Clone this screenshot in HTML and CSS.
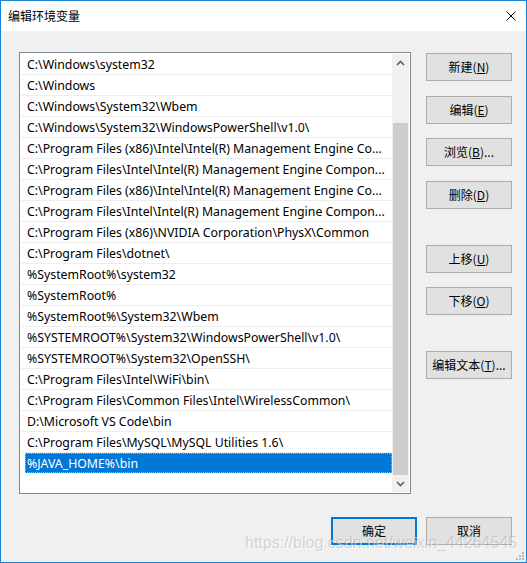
FILE: index.html
```html
<!DOCTYPE html>
<html lang="zh-CN">
<head>
<meta charset="utf-8">
<title>编辑环境变量</title>
<link rel="stylesheet" href="styles.css">
</head>
<body>
<div class="window">
  <div class="titlebar">
    <span class="title">编辑环境变量</span>
    <span class="close">
      <svg width="10" height="10" viewBox="0 0 10 10"><path d="M0.5 0.5 L9.5 9.5 M9.5 0.5 L0.5 9.5" stroke="#000" stroke-width="1" fill="none"/></svg>
    </span>
  </div>
  <div class="content">
    <div class="main">
      <div class="listbox">
        <ul class="items">
          <li>C:\Windows\system32</li>
          <li>C:\Windows</li>
          <li>C:\Windows\System32\Wbem</li>
          <li>C:\Windows\System32\WindowsPowerShell\v1.0\</li>
          <li>C:\Program Files (x86)\Intel\Intel(R) Management Engine Co...</li>
          <li>C:\Program Files\Intel\Intel(R) Management Engine Compon...</li>
          <li>C:\Program Files (x86)\Intel\Intel(R) Management Engine Co...</li>
          <li>C:\Program Files\Intel\Intel(R) Management Engine Compon...</li>
          <li>C:\Program Files (x86)\NVIDIA Corporation\PhysX\Common</li>
          <li>C:\Program Files\dotnet\</li>
          <li>%SystemRoot%\system32</li>
          <li>%SystemRoot%</li>
          <li>%SystemRoot%\System32\Wbem</li>
          <li>%SYSTEMROOT%\System32\WindowsPowerShell\v1.0\</li>
          <li>%SYSTEMROOT%\System32\OpenSSH\</li>
          <li>C:\Program Files\Intel\WiFi\bin\</li>
          <li>C:\Program Files\Common Files\Intel\WirelessCommon\</li>
          <li>D:\Microsoft VS Code\bin</li>
          <li>C:\Program Files\MySQL\MySQL Utilities 1.6\</li>
          <li class="selected"><span class="label">%JAVA_HOME%\bin</span></li>
        </ul>
        <div class="scrollbar">
          <div class="arrow">
            <svg width="9" height="6" viewBox="0 0 9 6"><path d="M1 5 L4.5 1.5 L8 5" stroke="#606060" stroke-width="1.6" fill="none"/></svg>
          </div>
          <div class="track"><div class="thumb"></div></div>
          <div class="arrow">
            <svg width="9" height="6" viewBox="0 0 9 6"><path d="M1 1 L4.5 4.5 L8 1" stroke="#606060" stroke-width="1.6" fill="none"/></svg>
          </div>
        </div>
      </div>
      <div class="side">
        <button class="btn b-new">新建(<u>N</u>)</button>
        <button class="btn b-edit">编辑(<u>E</u>)</button>
        <button class="btn b-browse">浏览(<u>B</u>)...</button>
        <button class="btn b-delete">删除(<u>D</u>)</button>
        <button class="btn b-up">上移(<u>U</u>)</button>
        <button class="btn b-down">下移(<u>O</u>)</button>
        <button class="btn b-text">编辑文本(<u>T</u>)...</button>
      </div>
    </div>
    <div class="footer">
      <button class="btn default">确定</button>
      <button class="btn">取消</button>
    </div>
  </div>
  <div class="watermark">https://blog.csdn.net/weixin_44264545</div>
  <svg class="grip" width="8" height="8" viewBox="0 0 8 8">
    <rect x="6" y="0" width="2" height="2" fill="#b8b8b8"/>
    <rect x="3" y="3" width="2" height="2" fill="#b8b8b8"/>
    <rect x="6" y="3" width="2" height="2" fill="#b8b8b8"/>
    <rect x="0" y="6" width="2" height="2" fill="#b8b8b8"/>
    <rect x="3" y="6" width="2" height="2" fill="#b8b8b8"/>
    <rect x="6" y="6" width="2" height="2" fill="#b8b8b8"/>
  </svg>
</div>
</body>
</html>
```

FILE: styles.css
```css
* {
  box-sizing: border-box;
}

html, body {
  margin: 0;
  padding: 0;
  background: #f0f0f0;
}

body {
  font-family: "Noto Sans", "Noto Sans CJK SC", sans-serif;
  font-size: 12px;
  color: #000;
}

.window {
  position: relative;
  width: 527px;
  height: 563px;
  border: 1px solid #1883d7;
  background: #f0f0f0;
  overflow: hidden;
}

/* title bar */
.titlebar {
  height: 30px;
  background: #fff;
  display: flex;
  align-items: center;
  padding-left: 7px;
}

.title {
  font-family: "Noto Sans CJK SC", sans-serif;
  font-size: 12px;
  line-height: 16px;
}

.close {
  margin-left: auto;
  margin-right: 10px;
  display: flex;
  width: 10px;
  height: 10px;
}

/* dialog body */
.content {
  padding: 21px 14px 0 18px;
}

.main {
  display: flex;
  gap: 15px;
}

.listbox {
  width: 392px;
  height: 442px;
  border: 1px solid #828790;
  background: #fff;
  padding: 1px;
  display: flex;
}

.items {
  flex: 1;
  min-width: 0;
  list-style: none;
  margin: 0;
  padding: 0;
  overflow: hidden;
  font-size: 12.3px;
}

.items li {
  height: 21px;
  line-height: 22px;
  border-bottom: 1px solid #ededed;
  padding-left: 6px;
  white-space: nowrap;
  overflow: hidden;
}

.items li.selected {
  padding-left: 4px;
  border-bottom-color: #fff;
}

.items li.selected .label {
  display: block;
  height: 20px;
  padding-left: 1px;
  background: #0078d7;
  color: #fff;
  border: 1px dotted #e0a868;
  line-height: 20px;
  overflow: hidden;
}

/* vertical scrollbar */
.scrollbar {
  width: 17px;
  background: #f0f0f0;
  display: flex;
  flex-direction: column;
}

.arrow {
  height: 17px;
  display: flex;
  align-items: center;
  justify-content: center;
}

.track {
  flex: 1;
  display: flex;
  flex-direction: column;
}

.thumb {
  margin: 52px 1px 0 1px;
  height: 352px;
  background: #cdcdcd;
}

/* command buttons */
.side {
  display: flex;
  flex-direction: column;
}

.btn {
  width: 86px;
  height: 28px;
  border: 1px solid #adadad;
  background: #e1e1e1;
  font-family: "Noto Sans CJK SC", sans-serif;
  font-size: 12px;
  color: #000;
  padding: 0 0 2px 0;
  display: flex;
  align-items: center;
  justify-content: center;
}

.btn u {
  text-decoration-thickness: 1px;
  text-underline-offset: 1px;
}

.b-new { margin-top: 1px; }
.b-edit { margin-top: 15px; }
.b-browse { margin-top: 14px; }
.b-delete { margin-top: 15px; }
.b-up { margin-top: 36px; }
.b-down { margin-top: 14px; }
.b-text { margin-top: 36px; }

.footer {
  display: flex;
  justify-content: flex-end;
  gap: 9px;
  margin-top: 23px;
}

.btn.default {
  border: 2px solid #0078d7;
}

/* blog watermark stamped over the dialog */
.watermark {
  position: absolute;
  left: 244px;
  top: 533px;
  font-family: "Liberation Sans", Arial, sans-serif;
  font-size: 16px;
  line-height: 18px;
  color: rgba(140, 140, 140, 0.32);
  text-shadow: 1px 1px 0 rgba(255, 255, 255, 0.55);
  white-space: nowrap;
  pointer-events: none;
}

.grip {
  position: absolute;
  right: 2px;
  bottom: 2px;
}
```
